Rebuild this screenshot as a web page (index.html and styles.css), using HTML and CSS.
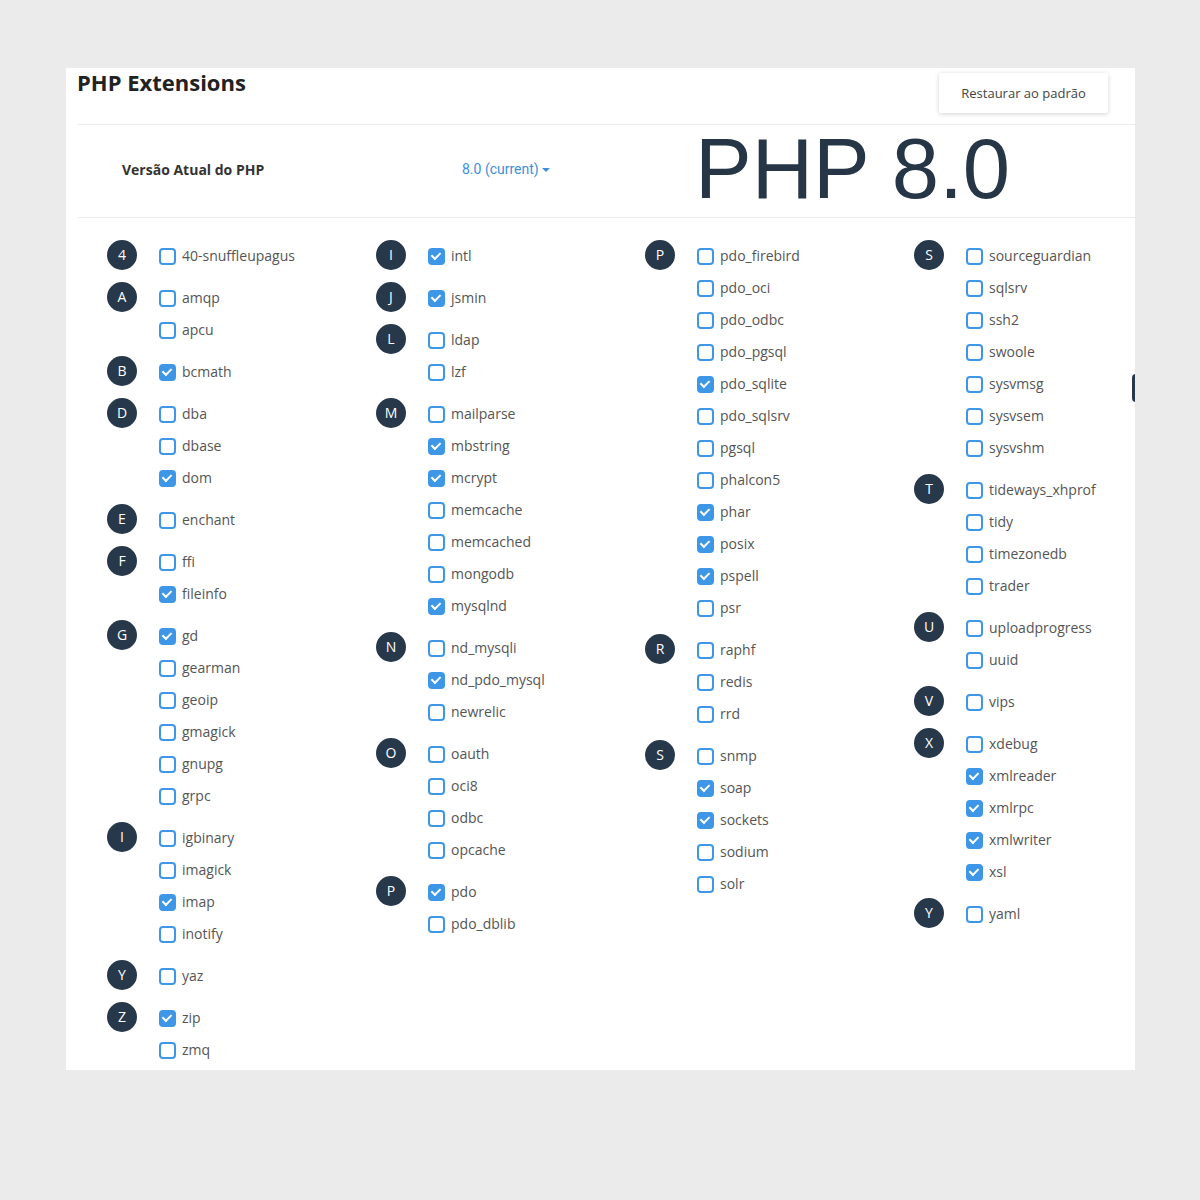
FILE: index.html
```html
<!doctype html>
<html>
  <head>
    <meta charset="utf-8">
    <title>PHP Extensions</title>
    <link rel="stylesheet" href="styles.css">
  </head>
  <body>
    <div class="panel">
      <div class="header">
        <h1>PHP Extensions</h1>
        <button class="reset">Restaurar ao padrão</button>
      </div>
      <div class="version">
        <b class="version-label">Versão Atual do PHP</b>
        <span class="version-select">8.0 (current)<i class="caret"></i></span>
        <span class="version-big">PHP 8.0</span>
      </div>
      <div class="extensions">
        <div class="column">
          <div class="group"><span class="badge">4</span><ul>
            <li><span class="box"></span>40-snuffleupagus</li>
          </ul></div>
          <div class="group"><span class="badge">A</span><ul>
            <li><span class="box"></span>amqp</li>
            <li><span class="box"></span>apcu</li>
          </ul></div>
          <div class="group"><span class="badge">B</span><ul>
            <li><span class="box on"></span>bcmath</li>
          </ul></div>
          <div class="group"><span class="badge">D</span><ul>
            <li><span class="box"></span>dba</li>
            <li><span class="box"></span>dbase</li>
            <li><span class="box on"></span>dom</li>
          </ul></div>
          <div class="group"><span class="badge">E</span><ul>
            <li><span class="box"></span>enchant</li>
          </ul></div>
          <div class="group"><span class="badge">F</span><ul>
            <li><span class="box"></span>ffi</li>
            <li><span class="box on"></span>fileinfo</li>
          </ul></div>
          <div class="group"><span class="badge">G</span><ul>
            <li><span class="box on"></span>gd</li>
            <li><span class="box"></span>gearman</li>
            <li><span class="box"></span>geoip</li>
            <li><span class="box"></span>gmagick</li>
            <li><span class="box"></span>gnupg</li>
            <li><span class="box"></span>grpc</li>
          </ul></div>
          <div class="group"><span class="badge">I</span><ul>
            <li><span class="box"></span>igbinary</li>
            <li><span class="box"></span>imagick</li>
            <li><span class="box on"></span>imap</li>
            <li><span class="box"></span>inotify</li>
          </ul></div>
          <div class="group"><span class="badge">Y</span><ul>
            <li><span class="box"></span>yaz</li>
          </ul></div>
          <div class="group"><span class="badge">Z</span><ul>
            <li><span class="box on"></span>zip</li>
            <li><span class="box"></span>zmq</li>
          </ul></div>
        </div>

        <div class="column">
          <div class="group"><span class="badge">I</span><ul>
            <li><span class="box on"></span>intl</li>
          </ul></div>
          <div class="group"><span class="badge">J</span><ul>
            <li><span class="box on"></span>jsmin</li>
          </ul></div>
          <div class="group"><span class="badge">L</span><ul>
            <li><span class="box"></span>ldap</li>
            <li><span class="box"></span>lzf</li>
          </ul></div>
          <div class="group"><span class="badge">M</span><ul>
            <li><span class="box"></span>mailparse</li>
            <li><span class="box on"></span>mbstring</li>
            <li><span class="box on"></span>mcrypt</li>
            <li><span class="box"></span>memcache</li>
            <li><span class="box"></span>memcached</li>
            <li><span class="box"></span>mongodb</li>
            <li><span class="box on"></span>mysqlnd</li>
          </ul></div>
          <div class="group"><span class="badge">N</span><ul>
            <li><span class="box"></span>nd_mysqli</li>
            <li><span class="box on"></span>nd_pdo_mysql</li>
            <li><span class="box"></span>newrelic</li>
          </ul></div>
          <div class="group"><span class="badge">O</span><ul>
            <li><span class="box"></span>oauth</li>
            <li><span class="box"></span>oci8</li>
            <li><span class="box"></span>odbc</li>
            <li><span class="box"></span>opcache</li>
          </ul></div>
          <div class="group"><span class="badge">P</span><ul>
            <li><span class="box on"></span>pdo</li>
            <li><span class="box"></span>pdo_dblib</li>
          </ul></div>
        </div>

        <div class="column">
          <div class="group"><span class="badge">P</span><ul>
            <li><span class="box"></span>pdo_firebird</li>
            <li><span class="box"></span>pdo_oci</li>
            <li><span class="box"></span>pdo_odbc</li>
            <li><span class="box"></span>pdo_pgsql</li>
            <li><span class="box on"></span>pdo_sqlite</li>
            <li><span class="box"></span>pdo_sqlsrv</li>
            <li><span class="box"></span>pgsql</li>
            <li><span class="box"></span>phalcon5</li>
            <li><span class="box on"></span>phar</li>
            <li><span class="box on"></span>posix</li>
            <li><span class="box on"></span>pspell</li>
            <li><span class="box"></span>psr</li>
          </ul></div>
          <div class="group"><span class="badge">R</span><ul>
            <li><span class="box"></span>raphf</li>
            <li><span class="box"></span>redis</li>
            <li><span class="box"></span>rrd</li>
          </ul></div>
          <div class="group"><span class="badge">S</span><ul>
            <li><span class="box"></span>snmp</li>
            <li><span class="box on"></span>soap</li>
            <li><span class="box on"></span>sockets</li>
            <li><span class="box"></span>sodium</li>
            <li><span class="box"></span>solr</li>
          </ul></div>
        </div>

        <div class="column">
          <div class="group"><span class="badge">S</span><ul>
            <li><span class="box"></span>sourceguardian</li>
            <li><span class="box"></span>sqlsrv</li>
            <li><span class="box"></span>ssh2</li>
            <li><span class="box"></span>swoole</li>
            <li><span class="box"></span>sysvmsg</li>
            <li><span class="box"></span>sysvsem</li>
            <li><span class="box"></span>sysvshm</li>
          </ul></div>
          <div class="group"><span class="badge">T</span><ul>
            <li><span class="box"></span>tideways_xhprof</li>
            <li><span class="box"></span>tidy</li>
            <li><span class="box"></span>timezonedb</li>
            <li><span class="box"></span>trader</li>
          </ul></div>
          <div class="group"><span class="badge">U</span><ul>
            <li><span class="box"></span>uploadprogress</li>
            <li><span class="box"></span>uuid</li>
          </ul></div>
          <div class="group"><span class="badge">V</span><ul>
            <li><span class="box"></span>vips</li>
          </ul></div>
          <div class="group"><span class="badge">X</span><ul>
            <li><span class="box"></span>xdebug</li>
            <li><span class="box on"></span>xmlreader</li>
            <li><span class="box on"></span>xmlrpc</li>
            <li><span class="box on"></span>xmlwriter</li>
            <li><span class="box on"></span>xsl</li>
          </ul></div>
          <div class="group"><span class="badge">Y</span><ul>
            <li><span class="box"></span>yaml</li>
          </ul></div>
        </div>
      </div>
      <span class="side-tab"></span>
    </div>
  </body>
</html>
```

FILE: styles.css
```css
html, body {
  margin: 0;
  padding: 0;
}

body {
  background: #ebebeb;
  font: 14px "Open Sans", sans-serif;
  color: #555;
}

.panel {
  position: relative;
  margin: 68px 0 0 66px;
  width: 1069px;
  background: white;
  overflow: hidden;
}

/* title bar */

.header {
  display: flex;
  justify-content: space-between;
  align-items: flex-start;
  height: 56px;
  margin-left: 12px;
  border-bottom: 1px solid #ececec;
}

h1 {
  margin: -1px 0 0 -1px;
  font-size: 22px;
  line-height: 30px;
  font-weight: 700;
  color: #222;
}

.reset {
  margin: 5px 27px 0 0;
  width: 169px;
  height: 40px;
  border: 0;
  border-radius: 2px;
  background: white;
  box-shadow: 0 1px 5px rgba(0, 0, 0, 0.18);
  font: 13px "Open Sans", sans-serif;
  color: #444;
}

/* current version row */

.version {
  display: flex;
  align-items: center;
  box-sizing: border-box;
  height: 93px;
  margin-left: 12px;
  padding: 0 0 4px 44px;
  border-bottom: 1px solid #ececec;
}

.version-label {
  width: 340px;
  font-weight: 700;
  color: #333;
}

.version-select {
  width: 235px;
  font: 14px Roboto, sans-serif;
  color: #3d8fdb;
}

.caret {
  display: inline-block;
  margin-left: 3px;
  vertical-align: middle;
  border-top: 4px solid #3d8fdb;
  border-left: 4px solid transparent;
  border-right: 4px solid transparent;
}

.version-big {
  margin: -2px 0 0 -2px;
  font: 85px/1 "Liberation Sans", Arial, sans-serif;
  color: #263646;
}

/* extension list */

.extensions {
  display: grid;
  grid-template-columns: repeat(4, 269px);
  padding: 21px 0 0 41px;
}

.group {
  display: flex;
  margin-bottom: 10px;
}

.column .group:last-child {
  margin-bottom: 5px;
}

.badge {
  flex: none;
  width: 30px;
  height: 30px;
  margin-top: 1px;
  margin-right: 23px;
  border-radius: 50%;
  background: #27384a;
  color: white;
  font-size: 14px;
  line-height: 30px;
  text-align: center;
}

ul {
  margin: 0;
  padding: 0;
  list-style: none;
}

li {
  display: flex;
  align-items: center;
  height: 32px;
  white-space: nowrap;
}

.box {
  position: relative;
  box-sizing: border-box;
  width: 17px;
  height: 17px;
  margin: 3px 6px 0 -1px;
  border: 2px solid #3d97e6;
  border-radius: 4px;
}

.box.on {
  background: #3d97e6;
}

/* white tick drawn from two borders */
.box.on::after {
  content: "";
  position: absolute;
  left: 3px;
  top: 2px;
  width: 7px;
  height: 4px;
  border-left: 2px solid white;
  border-bottom: 2px solid white;
  transform: rotate(-45deg);
  transform-origin: 40% 80%;
}

.side-tab {
  position: absolute;
  right: -6px;
  top: 306px;
  width: 9px;
  height: 28px;
  border-radius: 4px;
  background: #27384a;
}
```
